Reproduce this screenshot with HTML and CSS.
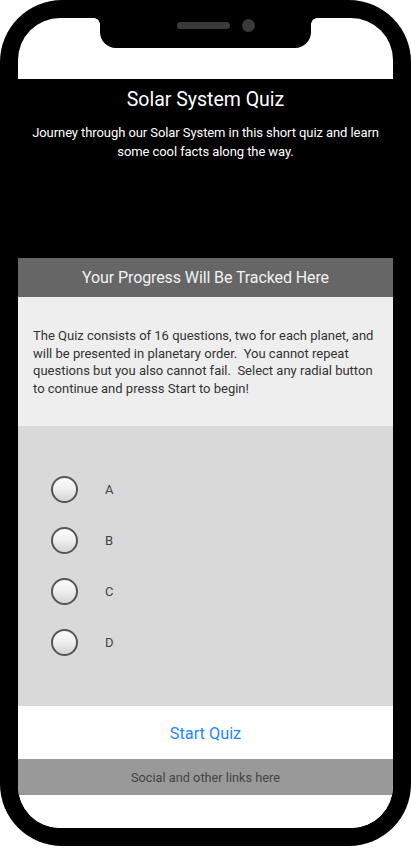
FILE: index.html
```html
<!DOCTYPE html>
<html lang="en">
<head>
<meta charset="utf-8">
<title>Solar System Quiz</title>
<link rel="stylesheet" href="styles.css">
</head>
<body>
<div class="phone">
  <div class="notch">
    <span class="speaker"></span>
    <span class="camera"></span>
  </div>
  <div class="screen">
    <header class="hero">
      <h1 class="title">Solar System Quiz</h1>
      <p class="subtitle">Journey through our Solar System in this short quiz and learn some cool facts along the way.</p>
    </header>
    <div class="progress">Your Progress Will Be Tracked Here</div>
    <section class="intro">
      <p>The Quiz consists of 16 questions, two for each planet, and will be presented in planetary order.&nbsp; You cannot repeat questions but you also cannot fail.&nbsp; Select any radial button to continue and presss Start to begin!</p>
    </section>
    <section class="options">
      <label class="option"><span class="radio"></span><span class="label">A</span></label>
      <label class="option"><span class="radio"></span><span class="label">B</span></label>
      <label class="option"><span class="radio"></span><span class="label">C</span></label>
      <label class="option"><span class="radio"></span><span class="label">D</span></label>
    </section>
    <div class="start">Start Quiz</div>
    <footer class="footer">Social and other links here</footer>
    <div class="bottom-space"></div>
  </div>
</div>
</body>
</html>
```

FILE: styles.css
```css
* { box-sizing: border-box; }
html, body { margin: 0; padding: 0; background: #fff; }
body { font-family: Roboto, "Noto Sans", "Liberation Sans", sans-serif; }

.phone {
  position: relative;
  width: 411px;
  height: 846px;
  background: #000;
  border-radius: 62px;
  padding: 18px;
}

.notch {
  position: absolute;
  left: 100px;
  top: 0;
  width: 211px;
  height: 48px;
  background: #000;
  border-radius: 0 0 16px 16px;
  display: flex;
  align-items: center;
  justify-content: center;
  gap: 12px;
  padding: 0 0 0 20px;
  z-index: 2;
}
.notch::before, .notch::after {
  content: "";
  position: absolute;
  top: 18px;
  width: 6px;
  height: 6px;
}
.notch::before { left: -6px; background: radial-gradient(circle at 0 100%, transparent 5.5px, #000 6px); }
.notch::after { right: -6px; background: radial-gradient(circle at 100% 100%, transparent 5.5px, #000 6px); }
.speaker {
  width: 53px;
  height: 7px;
  border-radius: 4px;
  background: #3a3a3a;
  margin-top: 3px;
}
.camera {
  width: 13px;
  height: 13px;
  border-radius: 50%;
  background: #3a3a3a;
  margin-top: 3px;
}

.screen {
  height: 810px;
  background: #fff;
  border-radius: 42px;
  overflow: hidden;
  display: flex;
  flex-direction: column;
  padding-top: 61px;
}

.hero {
  background: #000;
  height: 179px;
  padding: 10px 6px 0;
  text-align: center;
  color: #fff;
}
.title {
  margin: 0;
  font-size: 19.5px;
  font-weight: 400;
  line-height: 22px;
}
.subtitle {
  margin: 12px 0 0;
  font-size: 13px;
  line-height: 19px;
  letter-spacing: -0.08px;
}

.progress {
  background: #666;
  height: 39px;
  display: flex;
  align-items: center;
  justify-content: center;
  color: #f2f2f2;
  font-size: 16px;
  letter-spacing: -0.1px;
}

.intro {
  background: #eee;
  height: 129px;
  padding: 30px 15px 0;
}
.intro p {
  margin: 0;
  font-size: 13px;
  line-height: 17.7px;
  color: #333;
}

.options {
  background: #d9d9d9;
  height: 280px;
  padding: 38px 0 0 33px;
  display: flex;
  flex-direction: column;
}
.option {
  height: 51px;
  display: flex;
  align-items: center;
  gap: 27px;
}
.radio {
  width: 27px;
  height: 27px;
  border-radius: 50%;
  border: 2px solid #555;
  background: linear-gradient(to bottom, #fcfcfc 0%, #f0f0f0 45%, #d4d4d4 100%);
}
.label {
  font-size: 13px;
  color: #444;
}

.start {
  height: 53px;
  display: flex;
  align-items: center;
  justify-content: center;
  font-size: 16.3px;
  color: #1e88ff;
  background: #fff;
  padding-top: 1px;
}

.footer {
  background: #999;
  height: 36px;
  display: flex;
  align-items: center;
  justify-content: center;
  font-size: 12.75px;
  color: #444;
  padding-top: 1px;
}

.bottom-space { flex: 1; background: #fff; }
```
